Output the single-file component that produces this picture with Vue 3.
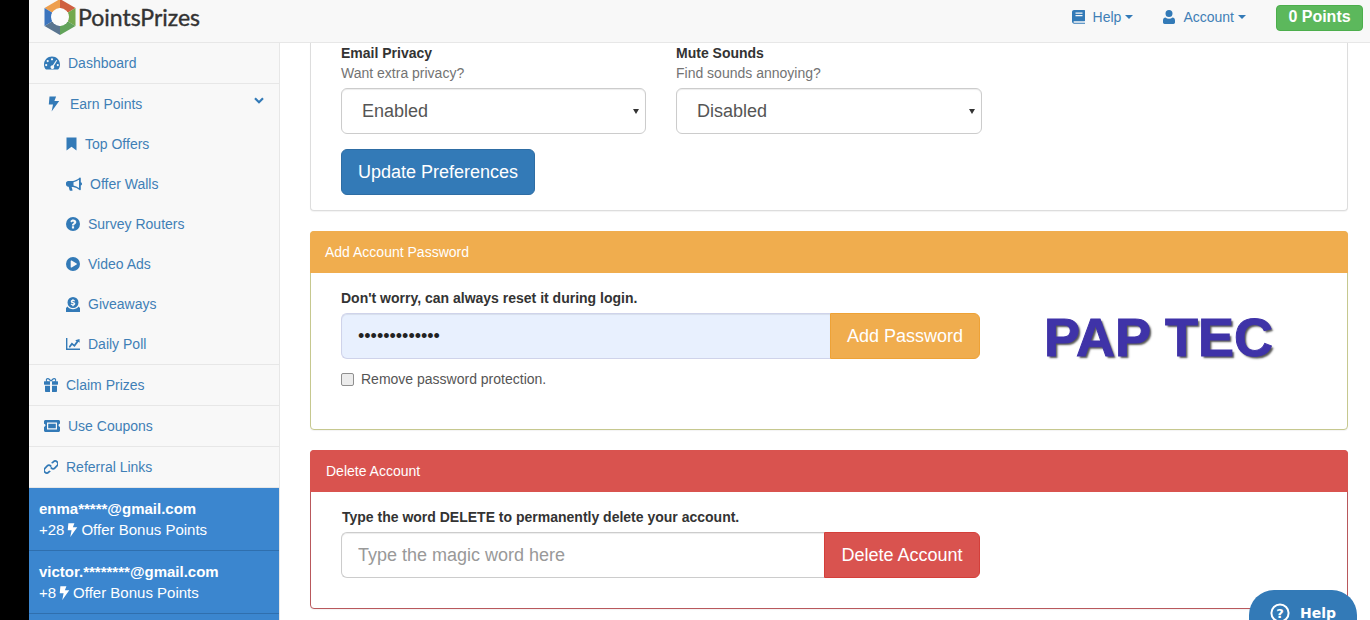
<script setup>
const icons = {
  gauge: { box: '0 0 16 14', d: 'M8 0.5C3.6 0.5 0 4 0 8.4c0 1.7.5 3.2 1.4 4.6.2.2.4.4.7.4h11.8c.3 0 .5-.2.7-.4.9-1.4 1.4-2.9 1.4-4.6C16 4 12.4.5 8 .5zM8 2.2a1.1 1.1 0 110 2.2 1.1 1.1 0 010-2.2zM3.7 4a1.1 1.1 0 110 2.2 1.1 1.1 0 010-2.2zM2.2 8a1.1 1.1 0 110 2.2 1.1 1.1 0 010-2.2zM12.3 4l.9.6-3.4 5.3a1.9 1.9 0 11-1-.6L12.3 4zM13.8 8a1.1 1.1 0 110 2.2 1.1 1.1 0 010-2.2z' },
  bolt: { box: '0 0 12 16', d: 'M1.500 0.500h6.600L6.400 5h4.800L3.600 15.500 5 8.400H.8z' },
  bookmark: { box: '0 0 11 14', d: 'M0.5 0.5h10v13L5.5 9.8.5 13.5z' },
  bullhorn: { box: '0 0 16 14', d: 'M14 0.5c-.2 0-.4.1-.5.2C11.6 2.3 9.500 3.600 7 3.900H2.200C1 3.900 0 4.900 0 6.100v1.500c0 1.200 1 2.200 2.200 2.200h.5l.9 3.500c.1.300.4.500.7.500h1.600c.5 0 .8-.5.600-.9L5.600 9.900H7c2.500.300 4.600 1.600 6.500 3.200.1.100.3.200.5.200.5 0 .8-.4.800-.8V8.500c.7-.2 1.200-.9 1.200-1.600s-.5-1.400-1.200-1.600V1.300c0-.4-.3-.8-.8-.8zM13 2.800v8.100c-1.700-1.200-3.500-2-5.500-2.400V5.200c2-.4 3.800-1.200 5.500-2.400z' },
  question: { box: '0 0 14 14', d: 'M7 0a7 7 0 100 14A7 7 0 007 0zm1.100 11.400H5.900V9.300h2.200v2.100zm1.700-4.900c-.3.400-.7.700-1.200 1-.4.300-.5.500-.5 1.100H5.900c0-1.200.3-1.700 1-2.200.5-.3 1-.6 1-1.100 0-.4-.4-.7-.9-.7-.5 0-.9.300-1.300.8L4.300 4.200C5 3.200 6 2.600 7.200 2.600c1.700 0 3.100 1 3.100 2.500 0 .5-.2 1-.5 1.400z' },
  play: { box: '0 0 14 14', d: 'M7 0a7 7 0 100 14A7 7 0 007 0zm3.600 7.500-5 2.900c-.4.200-.9 0-.9-.5V4.100c0-.5.500-.7.900-.5l5 2.900c.4.200.4.800 0 1z' },
  give: { box: '0 0 14 15', d: 'M7 0a5.500 5.500 0 100 11A5.500 5.500 0 007 0zm-.6 2.200h1.200v.8c.6.100 1.100.3 1.500.6l-.6 1c-.4-.3-.9-.5-1.400-.5-.4 0-.6.100-.6.300 0 .7 2.800.4 2.800 2.300 0 .9-.7 1.500-1.700 1.700v.8H6.400v-.8c-.7-.1-1.300-.4-1.800-.8l.7-1c.5.400 1 .6 1.600.6.400 0 .7-.1.700-.4 0-.7-2.800-.4-2.800-2.300 0-.9.700-1.500 1.600-1.700zM0 11l1.500-1.500C2.700 11.200 4.700 12.300 7 12.300s4.300-1.100 5.500-2.800L14 11v4H0z' },
  chart: { box: '0 0 14 12', d: 'M0 0h1.400v10.600H14V12H0zM2.800 8.400l3-3.800 2.400 2 2.300-3.300-1.300-1L13.500 1l.2 3.700-1.200-.9-3.900 5.300-2.500-2-2.300 3z' },
  gift: { box: '0 0 14 14', d: 'M3.800 0C2.600 0 1.800.8 1.800 1.900c0 .6.200 1.100.5 1.400H.5c-.3 0-.5.200-.5.500v2.500c0 .3.200.5.500.5H6V3.300h2v3.500h5.500c.3 0 .5-.2.500-.5V3.800c0-.3-.2-.5-.5-.5h-1.800c.3-.3.500-.8.500-1.400C12.200.8 11.400 0 10.200 0 8.800 0 7.700 1.200 7 2.300 6.300 1.200 5.200 0 3.800 0zm0 1.300c1 0 1.800 1 2.200 2H3.800a1 1 0 010-2zm6.400 0a1 1 0 010 2H8c.4-1 1.200-2 2.200-2zM1 7.800V13c0 .6.400 1 1 1h4V7.800zm7 0V14h4c.6 0 1-.4 1-1V7.800z' },
  ticket: { box: '0 0 16 12', d: 'M1.500 0h13C15.300 0 16 .7 16 1.500v2.200c-.8 0-1.500.7-1.500 1.500S15.200 6.800 16 6.800v3.700c0 .8-.7 1.500-1.500 1.500h-13C.7 12 0 11.300 0 10.500V6.800c.8 0 1.500-.7 1.500-1.500S.8 3.700 0 3.700V1.500C0 .7.700 0 1.500 0zM3 2.500v7h10v-7zm1.200 1.200h7.600v4.600H4.200z' },
  link: { box: '0 0 14 14', d: 'M8.700 1.300a3.500 3.500 0 015 5l-2.100 2.100a3.500 3.500 0 01-5 0l-.4-.5 1.200-1.100.4.400a1.800 1.800 0 002.600 0l2.100-2.100a1.800 1.800 0 00-2.600-2.600l-1.100 1.100A4.500 4.500 0 007 3zM5.300 12.700a3.500 3.500 0 01-5-5l2.100-2.100a3.500 3.500 0 015 0l.4.500-1.200 1.100-.4-.4a1.800 1.800 0 00-2.600 0L1.500 8.900a1.800 1.800 0 002.600 2.600l1.100-1.100c.6.300 1.200.5 1.800.6z' },
  book: { box: '0 0 13 14', d: 'M2 0h10.500c.3 0 .5.200.5.500v10.300c0 .3-.2.500-.5.500H2.300c-.5 0-.9.300-.9.700s.4.700.9.700H13v1H2.200C1 13.700 0 12.800 0 11.600V2C0 .9.900 0 2 0zm1.500 2.500v1.200h7V2.500zm0 2.500v1.200h7V5z' },
  user: { box: '0 0 12 14', d: 'M6 0a3.500 3.500 0 110 7 3.500 3.500 0 010-7zM2.500 7.500C3.400 8.300 4.600 8.700 6 8.700s2.600-.4 3.500-1.200c1.500 0 2.500 1.300 2.500 3v1.800c0 .9-.7 1.700-1.600 1.700H1.600C.7 14 0 13.200 0 12.300v-1.800c0-1.700 1-3 2.500-3z' }
}

const topItems = [
  { label: 'Dashboard', icon: 'gauge', w: 16, h: 14 }
]
const earn = { label: 'Earn Points', icon: 'bolt', w: 12, h: 16 }
const subItems = [
  { label: 'Top Offers', icon: 'bookmark', w: 11, h: 14 },
  { label: 'Offer Walls', icon: 'bullhorn', w: 16, h: 14 },
  { label: 'Survey Routers', icon: 'question', w: 14, h: 14 },
  { label: 'Video Ads', icon: 'play', w: 14, h: 14 },
  { label: 'Giveaways', icon: 'give', w: 14, h: 15 },
  { label: 'Daily Poll', icon: 'chart', w: 14, h: 12 }
]
const bottomItems = [
  { label: 'Claim Prizes', icon: 'gift', w: 14, h: 14 },
  { label: 'Use Coupons', icon: 'ticket', w: 16, h: 12 },
  { label: 'Referral Links', icon: 'link', w: 14, h: 14 }
]
const feed = [
  { email: 'enma*****@gmail.com', pts: '+28' },
  { email: 'victor.********@gmail.com', pts: '+8' }
]
</script>

<template>
  <div class="page">
    <div class="strip"></div>
    <div class="shell">
      <header class="navbar">
        <div class="brand">
          <svg class="logo" viewBox="0 0 34 36" width="34" height="36">
            <polygon points="17,0 17,9 9,13.500 1.500,9" fill="#ee9f4e" />
            <polygon points="17,0 32.500,9 25,13.500 17,9" fill="#cf5f3f" />
            <polygon points="32.500,9 32.500,27 25,22.500 25,13.500" fill="#74a94e" />
            <polygon points="32.500,27 17,36 17,27 25,22.500" fill="#62a35a" />
            <polygon points="17,36 1.500,27 9,22.500 17,27" fill="#5a7590" />
            <polygon points="1.500,27 1.500,9 9,13.500 9,22.500" fill="#3b74bd" />
            <circle cx="17" cy="18" r="9" fill="#fbfbfb" />
          </svg>
          <span class="brand-name">PointsPrizes</span>
        </div>
        <nav class="nav-right">
          <a class="nav-link help-link">
            <svg class="ic" :viewBox="icons.book.box" width="13" height="14"><path :d="icons.book.d" fill-rule="evenodd" /></svg>
            <span>Help</span><i class="caret"></i>
          </a>
          <a class="nav-link acct-link">
            <svg class="ic" :viewBox="icons.user.box" width="12" height="14"><path :d="icons.user.d" /></svg>
            <span>Account</span><i class="caret"></i>
          </a>
          <span class="points">0 Points</span>
        </nav>
      </header>

      <div class="body">
        <aside class="sidebar">
          <ul class="menu">
            <li v-for="it in topItems" :key="it.label" class="item">
              <svg class="ic" :viewBox="icons[it.icon].box" :width="it.w" :height="it.h"><path :d="icons[it.icon].d" fill-rule="evenodd" /></svg>
              <span>{{ it.label }}</span>
            </li>
            <li class="group">
              <div class="item earn">
                <svg class="ic" :viewBox="icons[earn.icon].box" :width="earn.w" :height="earn.h"><path :d="icons[earn.icon].d" /></svg>
                <span>{{ earn.label }}</span>
                <svg class="chev" viewBox="0 0 10 7" width="10" height="7"><path d="M1 1.200 5 5.200 9 1.200" /></svg>
              </div>
              <ul class="sub">
                <li v-for="it in subItems" :key="it.label" class="sub-item">
                  <svg class="ic" :viewBox="icons[it.icon].box" :width="it.w" :height="it.h"><path :d="icons[it.icon].d" fill-rule="evenodd" /></svg>
                  <span>{{ it.label }}</span>
                </li>
              </ul>
            </li>
            <li v-for="it in bottomItems" :key="it.label" class="item">
              <svg class="ic" :viewBox="icons[it.icon].box" :width="it.w" :height="it.h"><path :d="icons[it.icon].d" fill-rule="evenodd" /></svg>
              <span>{{ it.label }}</span>
            </li>
          </ul>
          <div class="feed">
            <div v-for="f in feed" :key="f.email" class="feed-item">
              <strong>{{ f.email }}</strong>
              <div class="feed-line">
                <span>{{ f.pts }}</span>
                <svg class="feed-bolt" :viewBox="icons.bolt.box" width="11" height="16"><path :d="icons.bolt.d" /></svg>
                <span>Offer Bonus Points</span>
              </div>
            </div>
          </div>
        </aside>

        <main class="main">
          <section class="panel panel-cut">
            <div class="panel-body">
              <div class="pref-grid">
                <div>
                  <div class="lbl">Email Privacy</div>
                  <div class="hint">Want extra privacy?</div>
                  <div class="select-wrap"><select class="ctl"><option>Enabled</option></select></div>
                </div>
                <div>
                  <div class="lbl">Mute Sounds</div>
                  <div class="hint">Find sounds annoying?</div>
                  <div class="select-wrap"><select class="ctl"><option>Disabled</option></select></div>
                </div>
              </div>
              <button class="btn btn-blue">Update Preferences</button>
            </div>
          </section>

          <section class="panel panel-warn">
            <div class="panel-head head-warn">Add Account Password</div>
            <div class="panel-body body-warn">
              <div class="warn-row">
                <div class="warn-form">
                  <div class="lbl">Don't worry, can always reset it during login.</div>
                  <div class="input-group">
                    <input class="ctl input pw" type="password" value="1234567890123" />
                    <button class="btn btn-side btn-orange">Add Password</button>
                  </div>
                  <label class="check"><input type="checkbox" /><span>Remove password protection.</span></label>
                </div>
                <div class="stamp">PAP TEC</div>
              </div>
            </div>
          </section>

          <section class="panel panel-danger">
            <div class="panel-head head-danger">Delete Account</div>
            <div class="panel-body body-danger">
              <div class="warn-form">
                <div class="lbl lbl-del">Type the word DELETE to permanently delete your account.</div>
                <div class="input-group">
                  <input class="ctl input" type="text" placeholder="Type the magic word here" />
                  <button class="btn btn-side btn-red">Delete Account</button>
                </div>
              </div>
            </div>
          </section>
        </main>
      </div>
    </div>

    <button class="help-bubble">
      <svg viewBox="0 0 20 20" width="20" height="20"><circle cx="10" cy="10" r="8.600" fill="none" stroke="#fff" stroke-width="2" /><text x="10" y="14.500" text-anchor="middle" class="q">?</text></svg>
      <span>Help</span>
    </button>
  </div>
</template>

<style>
html, body { margin: 0; padding: 0; background: #fff; overflow: hidden; }
</style>

<style scoped>
* { box-sizing: border-box; }
.page {
  display: flex;
  width: 1370px;
  height: 620px;
  overflow: hidden;
  font-family: "Liberation Sans", Arial, sans-serif;
  font-size: 14px;
  line-height: 20px;
  color: #333;
  background: #fff;
}
.strip { width: 29px; flex: none; background: #000; }
.shell { flex: 1; min-width: 0; display: flex; flex-direction: column; }

.navbar {
  height: 43px;
  flex: none;
  display: flex;
  align-items: flex-start;
  justify-content: space-between;
  background: #f8f8f8;
  border-bottom: 1px solid #e7e7e7;
}
.brand { display: flex; align-items: center; padding-left: 14px; height: 34px; }
.logo { display: block; margin-right: 1px; }
.brand-name {
  font-family: Lato, sans-serif;
  font-size: 23px;
  line-height: 34px;
  color: #333;
  -webkit-text-stroke: 0.4px #333;
}
.nav-right { display: flex; align-items: center; height: 34px; padding-right: 7px; }
.nav-link { display: flex; align-items: center; color: #3f7fb6; }
.nav-link .ic { margin-right: 8px; }
.help-link { margin-right: 30px; }
.acct-link { margin-right: 30px; }
.ic { flex: none; display: block; fill: #337ab7; }
.caret {
  display: inline-block;
  margin-left: 4px;
  border-left: 4px solid transparent;
  border-right: 4px solid transparent;
  border-top: 4px solid #337ab7;
}
.points {
  display: block;
  width: 87px;
  height: 26px;
  margin-top: 2px;
  line-height: 22px;
  text-align: center;
  background: #5cb85c;
  border: 1px solid #4cae4c;
  border-radius: 4px;
  color: #fff;
  font-weight: 700;
  font-size: 16px;
}

.body { flex: 1; min-height: 0; display: flex; }
.sidebar {
  width: 251px;
  flex: none;
  background: #f8f8f8;
  border-right: 1px solid #e7e7e7;
  overflow: hidden;
}
.menu, .sub { list-style: none; margin: 0; padding: 0; }
.item {
  height: 41px;
  display: flex;
  align-items: center;
  padding-left: 15px;
  color: #3f7fb6;
  border-bottom: 1px solid #e7e7e7;
}
.item .ic, .sub-item .ic { margin-right: 8px; }
.group { border-bottom: 1px solid #e7e7e7; }
.earn { position: relative; height: 40px; padding-left: 19px; border-bottom: 0; }
.earn .ic { margin-right: 10px; }
.chev {
  position: absolute;
  right: 15px;
  top: 13px;
  fill: none;
  stroke: #337ab7;
  stroke-width: 2.200;
}
.sub-item {
  height: 40px;
  display: flex;
  align-items: center;
  padding-left: 37px;
  color: #3f7fb6;
}
.feed { background: #3b86cf; height: 132px; }
.feed-item {
  height: 63px;
  padding: 10px 10px 0;
  color: #fff;
  font-size: 15px;
  border-bottom: 1px solid #2f6fae;
  line-height: 21px;
}
.feed-item strong { display: block; }
.feed-line { display: flex; align-items: center; }
.feed-bolt { fill: #fff; flex: none; margin: 0 3px; }

.main {
  flex: 1;
  min-width: 0;
  padding: 0 22px 0 30px;
  overflow: hidden;
}
.panel {
  background: #fff;
  border: 1px solid #ddd;
  border-radius: 4px;
  margin-bottom: 20px;
  box-shadow: 0 1px 1px rgba(0, 0, 0, .05);
}
.panel-cut { border-top: 0; border-top-left-radius: 0; border-top-right-radius: 0; }
.panel-warn { border-color: #c6c88f; }
.panel-danger { border-color: #b9585c; }
.panel-head {
  height: 42px;
  margin: -1px -1px 0;
  padding: 11px 15px;
  color: #fff;
  border-radius: 4px 4px 0 0;
}
.head-warn { background: #f0ad4e; }
.head-danger { background: #d9534f; padding-left: 16px; }
.panel-body { padding: 15px 30px; }
.panel-cut .panel-body { padding-top: 0; }
.body-warn { padding-bottom: 40px; }
.body-danger { padding-bottom: 30px; }
.pref-grid { display: grid; grid-template-columns: 305px 306px; column-gap: 30px; }
.lbl { font-weight: 700; height: 20px; }
.hint { color: #737373; height: 20px; margin-bottom: 5px; }
.ctl {
  display: block;
  width: 100%;
  height: 46px;
  padding: 10px 16px;
  font-family: inherit;
  font-size: 18px;
  line-height: 24px;
  color: #555;
  background: #fff;
  border: 1px solid #ccc;
  border-radius: 6px;
  box-shadow: inset 0 1px 1px rgba(0, 0, 0, .075);
}
.select-wrap { position: relative; }
.select-wrap select { appearance: none; -webkit-appearance: none; padding-left: 20px; }
.select-wrap::after {
  content: "";
  position: absolute;
  right: 7px;
  top: 21px;
  border-left: 3px solid transparent;
  border-right: 3px solid transparent;
  border-top: 5px solid #333;
  pointer-events: none;
}
.input::placeholder { color: #999; opacity: 1; }
.btn {
  display: block;
  font-family: inherit;
  font-size: 18px;
  line-height: 24px;
  color: #fff;
  border: 1px solid transparent;
  border-radius: 6px;
  padding: 10px 16px;
  height: 46px;
  white-space: nowrap;
}
.btn-blue { margin-top: 15px; background: #337ab7; border-color: #2e6da4; width: 194px; }
.warn-row { display: flex; align-items: flex-start; }
.warn-form { width: 639px; flex: none; }
.input-group { display: flex; margin-top: 5px; }
.input-group .input { flex: 1; min-width: 0; border-radius: 6px 0 0 6px; border-right: 0; }
.btn-side { flex: none; border-radius: 0 6px 6px 0; }
.pw { background: #e8f0fe; font-size: 18px; color: #222; border-color: #cfd3ea; }
.btn-orange { width: 150px; background: #f0ad4e; border-color: #eea236; }
.btn-red { width: 156px; background: #d9534f; border-color: #d43f3a; }
.check { display: flex; align-items: center; margin-top: 10px; height: 20px; color: #555; }
.check input {
  appearance: none;
  -webkit-appearance: none;
  margin: 0 7px 0 0;
  width: 13px;
  height: 13px;
  background: #ececec;
  border: 1px solid #8f8f8f;
  border-radius: 2px;
}
.lbl-del { padding-left: 1px; }
.stamp {
  margin: 18px 0 0 64px;
  font-size: 54px;
  line-height: 62px;
  font-weight: 700;
  color: #3f33a8;
  white-space: nowrap;
  -webkit-text-stroke: 1px #3f33a8;
  text-shadow: 2px 2px 2px #555;
}

.help-bubble {
  position: fixed;
  left: 1249px;
  top: 590px;
  width: 108px;
  height: 60px;
  border: 0;
  border-radius: 25px;
  background: #337ab7;
  color: #fff;
  display: flex;
  align-items: flex-start;
  padding: 13px 0 0 21px;
  font-family: "DejaVu Sans", sans-serif;
  font-weight: 700;
  font-size: 14px;
}
.help-bubble span { margin-left: 10px; line-height: 20px; }
.help-bubble svg { display: block; }
.q { font-size: 13px; font-weight: 700; fill: #fff; font-family: "DejaVu Sans", sans-serif; }
</style>
